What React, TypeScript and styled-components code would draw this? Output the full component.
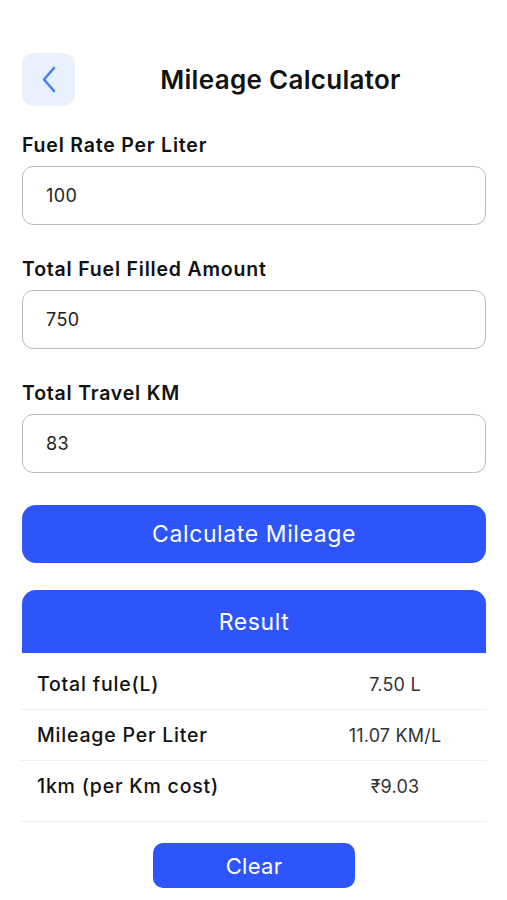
import React from "react";
import styled, { createGlobalStyle } from "styled-components";

const Global = createGlobalStyle`
  html, body { margin: 0; padding: 0; background: #ffffff; }
  body { font-family: Inter, "Noto Sans", "Liberation Sans", sans-serif; color: #111; }
  * { box-sizing: border-box; }
`;

const Page = styled.div`
  width: 507px;
  min-height: 900px;
  padding: 53px 21px 0 22px;
  display: flex;
  flex-direction: column;
`;

const Header = styled.div`
  display: flex;
  align-items: center;
  height: 53px;
  margin-bottom: 28px;
`;

const BackButton = styled.button`
  width: 53px;
  height: 53px;
  border: none;
  border-radius: 12px;
  background: #e9f0fd;
  display: flex;
  align-items: center;
  justify-content: center;
  padding: 0;
  flex-shrink: 0;
`;

const Title = styled.h1`
  flex: 1;
  margin: 0;
  text-align: center;
  font-size: 26px;
  font-weight: 600;
  color: #111;
  letter-spacing: 0.3px;
`;

const Form = styled.div`
  display: flex;
  flex-direction: column;
  gap: 33px;
`;

const Field = styled.div`
  display: flex;
  flex-direction: column;
`;

const Label = styled.label`
  font-size: 19.5px;
  font-weight: 600;
  color: #111;
  margin-bottom: 10px;
  line-height: 22px;
  letter-spacing: 0.8px;
`;

const Input = styled.div`
  height: 59px;
  border: 1.5px solid #bdbdbd;
  border-radius: 11px;
  display: flex;
  align-items: center;
  padding-left: 23px;
  font-size: 18px;
  letter-spacing: 0.4px;
  color: #222;
`;

const PrimaryButton = styled.button`
  height: 58px;
  border: none;
  border-radius: 14px;
  background: #2e55fb;
  color: #fff;
  font-family: inherit;
  font-size: 23px;
  letter-spacing: 0.6px;
  font-weight: 400;
  margin-top: 32px;
  margin-bottom: 27px;
`;

const ResultHeader = styled.div`
  height: 63px;
  border-radius: 14px 14px 0 0;
  background: #2e55fb;
  color: #fff;
  font-size: 23px;
  letter-spacing: 0.6px;
  display: flex;
  align-items: center;
  justify-content: center;
`;

const ResultList = styled.div`
  display: flex;
  flex-direction: column;
  padding-top: 6px;
  margin: 0 -1px;
`;

const Row = styled.div<{ $tail?: boolean }>`
  height: ${(p) => (p.$tail ? 61 : 51)}px;
  padding: 0 19px ${(p) => (p.$tail ? 10 : 0)}px 16px;
  display: grid;
  grid-template-columns: 1fr 146px;
  align-items: center;
  border-bottom: 1px solid #efefef;
`;

const RowLabel = styled.span`
  font-size: 19.5px;
  font-weight: 500;
  letter-spacing: 0.8px;
  color: #111;
`;

const RowValue = styled.span`
  font-size: 18px;
  letter-spacing: 0.2px;
  color: #333;
  text-align: center;
`;

const ClearButton = styled.button`
  align-self: center;
  width: 202px;
  height: 45px;
  margin-top: 21px;
  border: none;
  border-radius: 10px;
  background: #2e55fb;
  color: #fff;
  font-family: inherit;
  font-size: 22px;
  letter-spacing: 0.3px;
`;

const rows = [
  { label: "Total fule(L)", value: "7.50 L" },
  { label: "Mileage Per Liter", value: "11.07 KM/L" },
  { label: "1km (per Km cost)", value: "₹9.03" },
];

const fields = [
  { label: "Fuel Rate Per Liter", value: "100" },
  { label: "Total Fuel Filled Amount", value: "750" },
  { label: "Total Travel KM", value: "83" },
];

export default function App() {
  return (
    <>
      <Global />
      <Page>
        <Header>
          <BackButton aria-label="Back">
            <svg width="16" height="27" viewBox="0 0 16 27" fill="none">
              <path d="M13 2 L3 13.5 L13 25" stroke="#4a7ff0" strokeWidth="2.6" strokeLinecap="round" strokeLinejoin="round" />
            </svg>
          </BackButton>
          <Title>Mileage Calculator</Title>
        </Header>
        <Form>
          {fields.map((f) => (
            <Field key={f.label}>
              <Label>{f.label}</Label>
              <Input>{f.value}</Input>
            </Field>
          ))}
        </Form>
        <PrimaryButton>Calculate Mileage</PrimaryButton>
        <ResultHeader>Result</ResultHeader>
        <ResultList>
          {rows.map((r, i) => (
            <Row key={r.label} $tail={i === rows.length - 1}>
              <RowLabel>{r.label}</RowLabel>
              <RowValue>{r.value}</RowValue>
            </Row>
          ))}
        </ResultList>
        <ClearButton>Clear</ClearButton>
      </Page>
    </>
  );
}
